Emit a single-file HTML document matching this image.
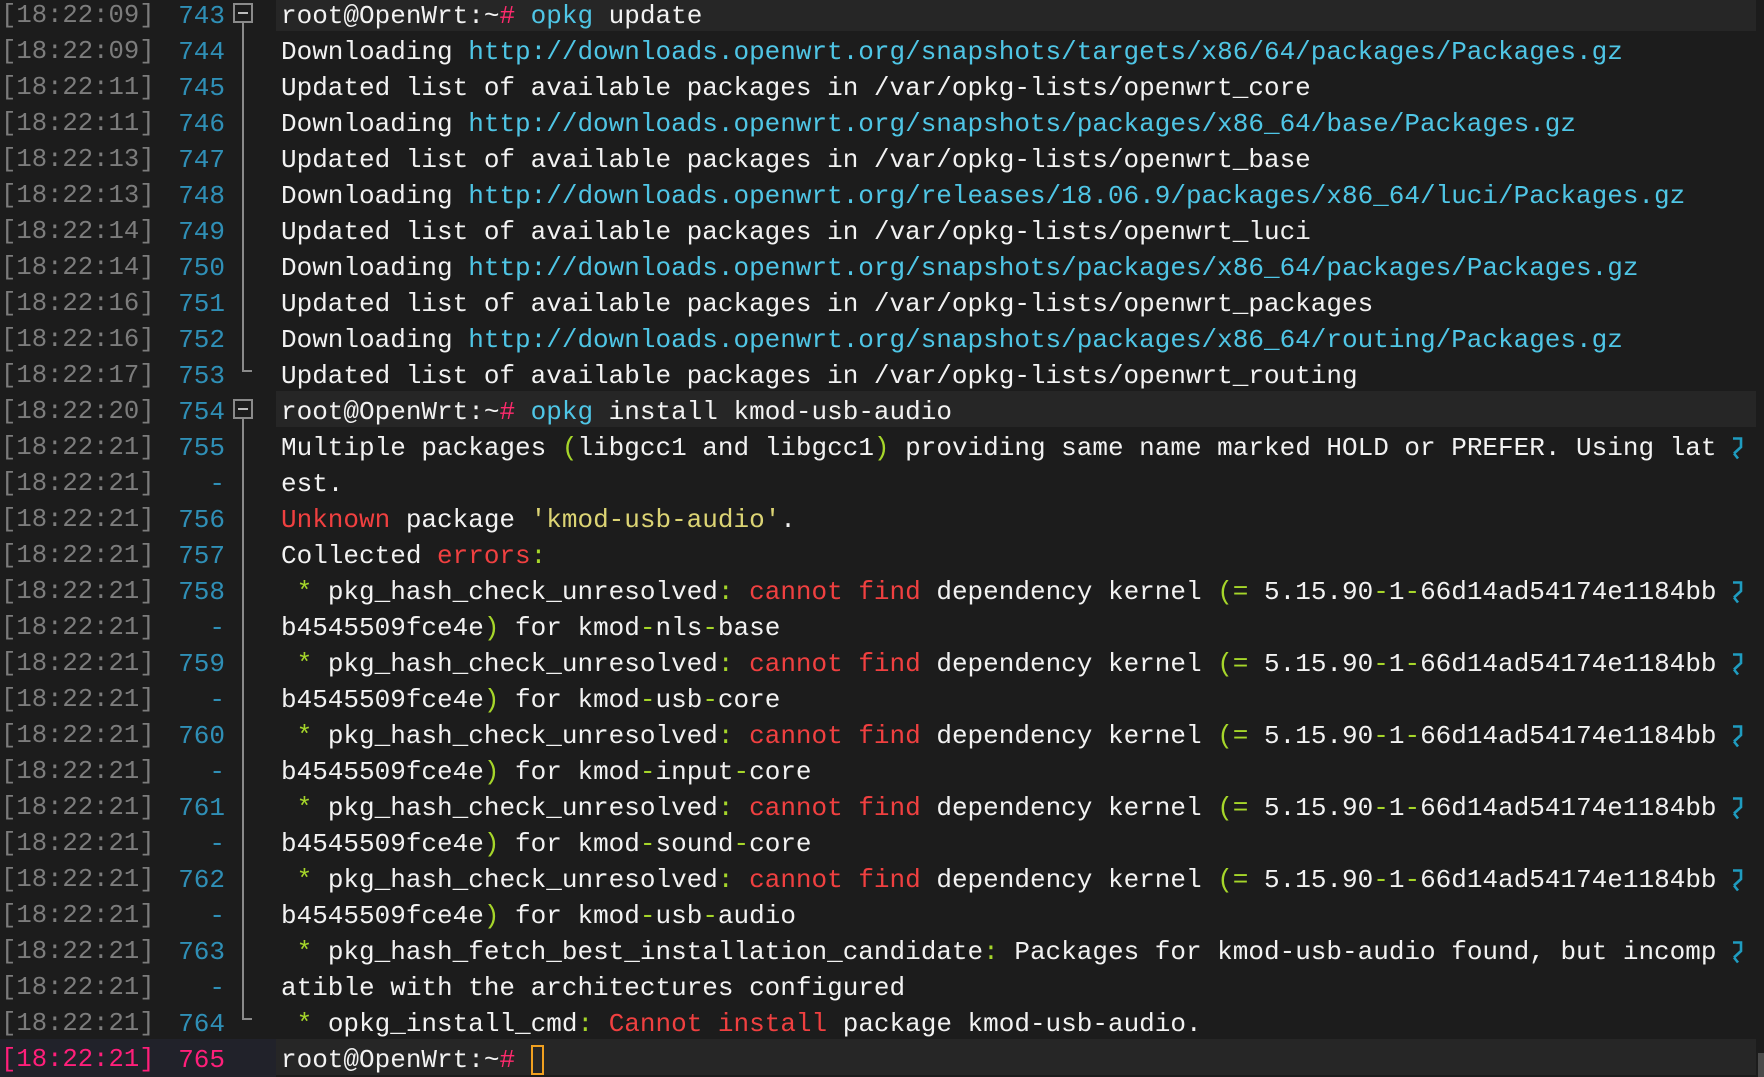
<!DOCTYPE html>
<html><head><meta charset="utf-8">
<style>
html,body{margin:0;padding:0;background:#1c1c1c;width:1764px;height:1077px;overflow:hidden}
body{position:relative;font-family:"Liberation Mono","DejaVu Sans Mono",monospace;font-size:26px;color:#f2f2f2}
.row{position:absolute;left:0;width:1764px;height:36px;line-height:36px;white-space:pre}
.ts,.num,.txt{top:3px}
.ts{position:absolute;left:1px;color:#7c7c7c;font-size:25.6px}
.num{position:absolute;left:150px;width:75px;text-align:right;color:#2f8fb6}
.txt{position:absolute;left:281px}
.hl{position:absolute;left:276px;width:1480px;height:36px;background:#262626}
.c{color:#4fc6e6}.p{color:#ff2a6d}.r{color:#f04040}.g{color:#a6d62a}.y{color:#dcd474}
.wrap{position:absolute;left:1730px;top:9px;width:16px;height:24px}
.fold{position:absolute;left:233px;width:20px;height:20px;border:2px solid #8a8a8a;box-sizing:border-box}
.fold:after{content:"";position:absolute;left:3px;top:7px;width:10px;height:2px;background:#bbb}
.vl{position:absolute;left:242px;width:2px;background:#8a8a8a}
.cn{position:absolute;left:242px;width:10px;height:2px;background:#8a8a8a}
</style></head><body>

<svg width="0" height="0" style="position:absolute"><defs><symbol id="wr" viewBox="0 0 16 24"><path d="M3 2.5H11V11L4 17.5M4 17.5L8 22.5" fill="none" stroke="#1f9cc0" stroke-width="2.6"/></symbol></defs></svg>

<div class="hl" style="top:-5px"></div>
<div class="hl" style="top:391px"></div>
<div style="position:absolute;left:0;top:1039px;width:276px;height:38px;background:#21222a"></div>
<div style="position:absolute;left:276px;top:1039px;width:1480px;height:36px;background:#262626"></div>
<div style="position:absolute;left:1758px;top:1053px;width:6px;height:24px;background:#4a4a4a"></div>

<div class="fold" style="top:3px"></div>
<div class="vl" style="top:23px;height:349px"></div>
<div class="cn" style="top:370px"></div>
<div class="fold" style="top:399px"></div>
<div class="vl" style="top:419px;height:601px"></div>
<div class="cn" style="top:1018px"></div>

<div class="row" style="top:-5px"><span class="ts">[18:22:09]</span><span class="num">743</span><span class="txt">root@OpenWrt:~<span class="p">#</span> <span class="c">opkg</span> update</span></div>
<div class="row" style="top:31px"><span class="ts">[18:22:09]</span><span class="num">744</span><span class="txt">Downloading <span class="c">http://downloads.openwrt.org/snapshots/targets/x86/64/packages/Packages.gz</span></span></div>
<div class="row" style="top:67px"><span class="ts">[18:22:11]</span><span class="num">745</span><span class="txt">Updated list of available packages in /var/opkg-lists/openwrt_core</span></div>
<div class="row" style="top:103px"><span class="ts">[18:22:11]</span><span class="num">746</span><span class="txt">Downloading <span class="c">http://downloads.openwrt.org/snapshots/packages/x86_64/base/Packages.gz</span></span></div>
<div class="row" style="top:139px"><span class="ts">[18:22:13]</span><span class="num">747</span><span class="txt">Updated list of available packages in /var/opkg-lists/openwrt_base</span></div>
<div class="row" style="top:175px"><span class="ts">[18:22:13]</span><span class="num">748</span><span class="txt">Downloading <span class="c">http://downloads.openwrt.org/releases/18.06.9/packages/x86_64/luci/Packages.gz</span></span></div>
<div class="row" style="top:211px"><span class="ts">[18:22:14]</span><span class="num">749</span><span class="txt">Updated list of available packages in /var/opkg-lists/openwrt_luci</span></div>
<div class="row" style="top:247px"><span class="ts">[18:22:14]</span><span class="num">750</span><span class="txt">Downloading <span class="c">http://downloads.openwrt.org/snapshots/packages/x86_64/packages/Packages.gz</span></span></div>
<div class="row" style="top:283px"><span class="ts">[18:22:16]</span><span class="num">751</span><span class="txt">Updated list of available packages in /var/opkg-lists/openwrt_packages</span></div>
<div class="row" style="top:319px"><span class="ts">[18:22:16]</span><span class="num">752</span><span class="txt">Downloading <span class="c">http://downloads.openwrt.org/snapshots/packages/x86_64/routing/Packages.gz</span></span></div>
<div class="row" style="top:355px"><span class="ts">[18:22:17]</span><span class="num">753</span><span class="txt">Updated list of available packages in /var/opkg-lists/openwrt_routing</span></div>
<div class="row" style="top:391px"><span class="ts">[18:22:20]</span><span class="num">754</span><span class="txt">root@OpenWrt:~<span class="p">#</span> <span class="c">opkg</span> install kmod-usb-audio</span></div>
<div class="row" style="top:427px"><span class="ts">[18:22:21]</span><span class="num">755</span><span class="txt">Multiple packages <span class="g">(</span>libgcc1 and libgcc1<span class="g">)</span> providing same name marked HOLD or PREFER. Using lat</span><svg class="wrap"><use href="#wr"/></svg></div>
<div class="row" style="top:463px"><span class="ts">[18:22:21]</span><span class="num">-</span><span class="txt">est.</span></div>
<div class="row" style="top:499px"><span class="ts">[18:22:21]</span><span class="num">756</span><span class="txt"><span class="r">Unknown</span> package <span class="y">'kmod-usb-audio'</span>.</span></div>
<div class="row" style="top:535px"><span class="ts">[18:22:21]</span><span class="num">757</span><span class="txt">Collected <span class="r">errors</span><span class="g">:</span></span></div>
<div class="row" style="top:571px"><span class="ts">[18:22:21]</span><span class="num">758</span><span class="txt"> <span class="g">*</span> pkg_hash_check_unresolved<span class="g">:</span> <span class="r">cannot find</span> dependency kernel <span class="g">(=</span> 5.15.90<span class="g">-</span>1<span class="g">-</span>66d14ad54174e1184bb</span><svg class="wrap"><use href="#wr"/></svg></div>
<div class="row" style="top:607px"><span class="ts">[18:22:21]</span><span class="num">-</span><span class="txt">b4545509fce4e<span class="g">)</span> for kmod<span class="g">-</span>nls<span class="g">-</span>base</span></div>
<div class="row" style="top:643px"><span class="ts">[18:22:21]</span><span class="num">759</span><span class="txt"> <span class="g">*</span> pkg_hash_check_unresolved<span class="g">:</span> <span class="r">cannot find</span> dependency kernel <span class="g">(=</span> 5.15.90<span class="g">-</span>1<span class="g">-</span>66d14ad54174e1184bb</span><svg class="wrap"><use href="#wr"/></svg></div>
<div class="row" style="top:679px"><span class="ts">[18:22:21]</span><span class="num">-</span><span class="txt">b4545509fce4e<span class="g">)</span> for kmod<span class="g">-</span>usb<span class="g">-</span>core</span></div>
<div class="row" style="top:715px"><span class="ts">[18:22:21]</span><span class="num">760</span><span class="txt"> <span class="g">*</span> pkg_hash_check_unresolved<span class="g">:</span> <span class="r">cannot find</span> dependency kernel <span class="g">(=</span> 5.15.90<span class="g">-</span>1<span class="g">-</span>66d14ad54174e1184bb</span><svg class="wrap"><use href="#wr"/></svg></div>
<div class="row" style="top:751px"><span class="ts">[18:22:21]</span><span class="num">-</span><span class="txt">b4545509fce4e<span class="g">)</span> for kmod<span class="g">-</span>input<span class="g">-</span>core</span></div>
<div class="row" style="top:787px"><span class="ts">[18:22:21]</span><span class="num">761</span><span class="txt"> <span class="g">*</span> pkg_hash_check_unresolved<span class="g">:</span> <span class="r">cannot find</span> dependency kernel <span class="g">(=</span> 5.15.90<span class="g">-</span>1<span class="g">-</span>66d14ad54174e1184bb</span><svg class="wrap"><use href="#wr"/></svg></div>
<div class="row" style="top:823px"><span class="ts">[18:22:21]</span><span class="num">-</span><span class="txt">b4545509fce4e<span class="g">)</span> for kmod<span class="g">-</span>sound<span class="g">-</span>core</span></div>
<div class="row" style="top:859px"><span class="ts">[18:22:21]</span><span class="num">762</span><span class="txt"> <span class="g">*</span> pkg_hash_check_unresolved<span class="g">:</span> <span class="r">cannot find</span> dependency kernel <span class="g">(=</span> 5.15.90<span class="g">-</span>1<span class="g">-</span>66d14ad54174e1184bb</span><svg class="wrap"><use href="#wr"/></svg></div>
<div class="row" style="top:895px"><span class="ts">[18:22:21]</span><span class="num">-</span><span class="txt">b4545509fce4e<span class="g">)</span> for kmod<span class="g">-</span>usb<span class="g">-</span>audio</span></div>
<div class="row" style="top:931px"><span class="ts">[18:22:21]</span><span class="num">763</span><span class="txt"> <span class="g">*</span> pkg_hash_fetch_best_installation_candidate<span class="g">:</span> Packages for kmod-usb-audio found, but incomp</span><svg class="wrap"><use href="#wr"/></svg></div>
<div class="row" style="top:967px"><span class="ts">[18:22:21]</span><span class="num">-</span><span class="txt">atible with the architectures configured</span></div>
<div class="row" style="top:1003px"><span class="ts">[18:22:21]</span><span class="num">764</span><span class="txt"> <span class="g">*</span> opkg_install_cmd<span class="g">:</span> <span class="r">Cannot install</span> package kmod-usb-audio.</span></div>
<div class="row" style="top:1039px"><span class="ts" style="color:#ff1f7a">[18:22:21]</span><span class="num" style="color:#ff1f7a">765</span><span class="txt">root@OpenWrt:~<span class="p">#</span> <span style="display:inline-block;width:13px;height:30px;border:2px solid #f0a020;box-sizing:border-box;vertical-align:middle"></span></span></div>
</body></html>
